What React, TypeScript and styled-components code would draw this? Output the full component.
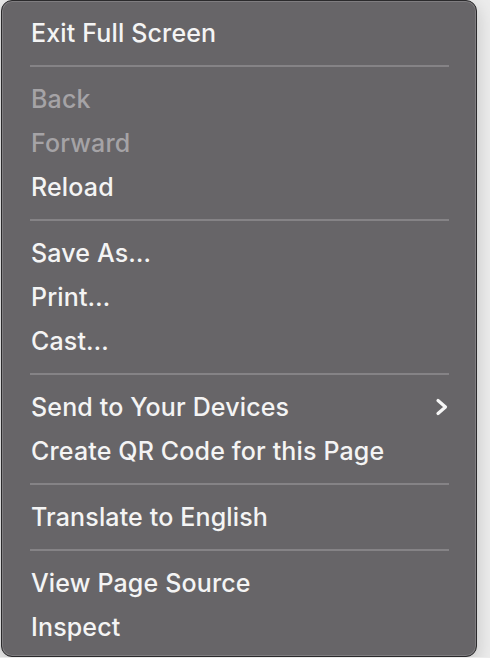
import React from "react";
import styled, { createGlobalStyle } from "styled-components";

const Global = createGlobalStyle`
  html, body {
    margin: 0;
    padding: 0;
    background: #ececec;
  }
  body {
    font-family: Inter, "Noto Sans", "Liberation Sans", sans-serif;
    -webkit-font-smoothing: antialiased;
  }
`;

const Menu = styled.div`
  box-sizing: border-box;
  margin-left: 1px;
  width: 476px;
  height: 657px;
  background: #676568;
  border: 1px solid #2b2a2c;
  border-radius: 11px;
  box-shadow: inset 0 0 0 1px rgba(255, 255, 255, 0.16), 0 6px 18px rgba(0, 0, 0, 0.18);
  padding: 10px 0 0 0;
  display: flex;
  flex-direction: column;
`;

const Item = styled.div<{ $disabled?: boolean }>`
  height: 44px;
  display: flex;
  align-items: center;
  justify-content: space-between;
  padding: 0 28px 0 29px;
  font-size: 25px;
  font-weight: 500;
  letter-spacing: 0.15px;
  color: ${(p) => (p.$disabled ? "#a5a3a6" : "#f4f4f4")};
`;

const Separator = styled.div`
  height: 22px;
  display: flex;
  align-items: center;
  padding: 0 27px 0 28px;
  &::after {
    content: "";
    flex: 1;
    height: 2px;
    background: #858386;
  }
`;

const Chevron = () => (
  <svg width="13" height="18" viewBox="0 0 13 18">
    <polyline
      points="3,2.5 10.5,9 3,15.5"
      fill="none"
      stroke="#f6f6f6"
      strokeWidth="3.2"
      strokeLinecap="round"
      strokeLinejoin="round"
    />
  </svg>
);

type Entry = { label: string; disabled?: boolean; submenu?: boolean } | "sep";

const entries: Entry[] = [
  { label: "Exit Full Screen" },
  "sep",
  { label: "Back", disabled: true },
  { label: "Forward", disabled: true },
  { label: "Reload" },
  "sep",
  { label: "Save As…" },
  { label: "Print…" },
  { label: "Cast…" },
  "sep",
  { label: "Send to Your Devices", submenu: true },
  { label: "Create QR Code for this Page" },
  "sep",
  { label: "Translate to English" },
  "sep",
  { label: "View Page Source" },
  { label: "Inspect" },
];

export default function App() {
  return (
    <>
      <Global />
      <Menu>
        {entries.map((e, i) =>
          e === "sep" ? (
            <Separator key={i} />
          ) : (
            <Item key={i} $disabled={e.disabled}>
              <span>{e.label}</span>
              {e.submenu && <Chevron />}
            </Item>
          )
        )}
      </Menu>
    </>
  );
}
